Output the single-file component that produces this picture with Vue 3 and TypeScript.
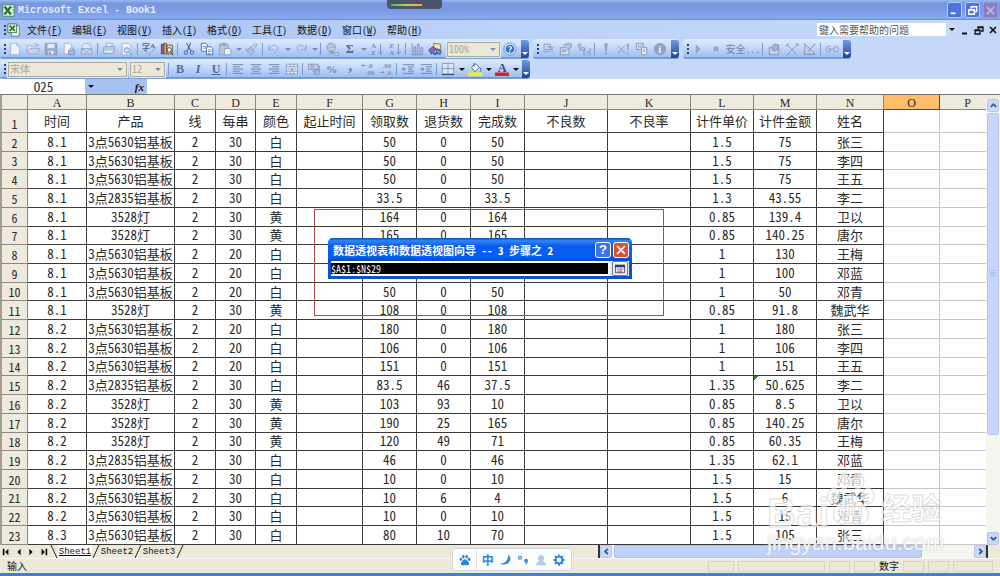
<script setup lang="ts">
import { ref } from 'vue'

type Shape = [d: string, fill: string, stroke?: string]
type Glyph = [x: number, y: number, size: number, text: string, fill?: string]
interface Icon { s?: Shape[]; t?: Glyph[] }
interface Tool { k: 'icon' | 'sep' | 'drop' | 'text'; icon?: string; label?: string; cls?: string; dark?: boolean }

const G = '#8092b5'
const L = '#dfe8f8'
const icons: Record<string, Icon> = {
  new: { s: [['M3 1.5h7l3 3v10H3z', '#eef3fc', '#a3b2ce'], ['M10 1.5v3h3', 'none', '#a3b2ce']] },
  open: { s: [['M1.5 13V4h4l1 1.5h5V8', L, '#9aabc9'], ['M1.5 13.5l3-6h11l-3 6z', '#c9d6ee', '#9aabc9'], ['M9 3c2-2 4-1 5 1m0-2v2h-2', 'none', '#9aabc9']] },
  save: { s: [['M1.5 1.5h13v13h-13z', '#98a9c9', G], ['M4 2h8v5H4z', '#e4ecfa'], ['M5 10h6v4H5z', '#dbe5f7'], ['M6 11h2v3H6z', G]] },
  perm: { s: [['M2.5 1.5h6l3 3v9h-9z', '#eef3fc', '#a3b2ce'], ['M7.5 9.5h7v5h-7z', '#a9b8d4', G], ['M9 9c0-3 4-3 4 0', 'none', G]] },
  mail: { s: [['M2.5 6c0-6 10-6 10 0v3h-10z', L, '#9aabc9'], ['M1.5 7.5h12v6h-12z', '#c7d4ed', '#8fa1c3'], ['M1.5 7.5l6 4 6-4', 'none', '#8fa1c3']] },
  print: { s: [['M5 6V1.5h7L11 6', '#f1f5fd', '#9aabc9'], ['M1.5 7l2-2h11v6l-2 2h-11z', '#b9c7e1', '#8fa1c3'], ['M3 10h9v2H3z', '#e7eefb']] },
  preview: { s: [['M2.5 1.5h7l3 3v10h-10z', '#eef3fc', '#a3b2ce'], ['M11 9.5a3 3 0 1 1-6 0 3 3 0 0 1 6 0M10 12l4 3', '#cddaf1', G]] },
  spell: { s: [['M4 10l4 5 8-9', 'none', '#7c94c0'], ['M4 11l4 4 8-8', 'none', '#a7b8d9']], t: [[0, 9, 9, '字', '#566b95'], [9, 7, 8, 'A', '#566b95']] },
  research: { s: [['M1.5 2.5h3v11h-3z', '#8a5aa8', '#4b3a7c'], ['M4.5 1.5h3v12h-3z', '#d9a53c', '#7a5b25'], ['M8 3.5h6v10H8z', '#e9e1c8', '#5a5248'], ['M13 9a2.5 2.5 0 1 1-5 0 2.5 2.5 0 0 1 5 0M12 11l3 4', '#fff', '#3c3930']] },
  cut: { s: [['M5 1l5 9M10 1L6 10', 'none', '#23467c'], ['M6.5 12a2 2 0 1 1-4 0 2 2 0 0 1 4 0M13.5 12a2 2 0 1 1-4 0 2 2 0 0 1 4 0', 'none', '#2558b8']] },
  copy: { s: [['M1.5 1.5h5l2 2v7h-7z', '#fff', '#3f64a3'], ['M7.5 5.5h5l2 2v7h-7z', '#fff', '#3f64a3'], ['M3 5h4M3 7h4M9 9h4M9 11h4M9 13h3', 'none', '#5c82c4']] },
  paste: { s: [['M1.5 2.5h10v12h-10z', '#b7c4dd', '#8fa1c3'], ['M4 1h5v3H4z', '#93a5c7'], ['M7.5 7.5h6l1 1v6h-7z', '#eff4fd', '#8fa1c3']] },
  brush: { s: [['M1 9l6-3 4 4-4 5z', '#aebedc', '#8fa1c3'], ['M6 7l6-5 2 1-5 6z', '#c7d4ed', '#8fa1c3']] },
  undo: { s: [['M2 3v6h6M3 8c2-6 11-6 9 1-1 2-2 3-4 4', 'none', '#8c9ec2']] },
  redo: { s: [['M14 3v6H8M13 8C11 2 2 2 4 9c1 2 2 3 4 4', 'none', '#8c9ec2']] },
  link: { s: [['M12 6a5 5 0 1 1-10 0 5 5 0 0 1 10 0', '#a9bad8', '#8fa1c3'], ['M3 4c3 2 5 0 7-2M4 9c2-2 5-1 7-1', 'none', '#dbe5f6'], ['M6 12h4m1 0h4v3h-4zM5 10.5h4v3H5z', '#dbe5f6', G]] },
  sum: { t: [[3, 13, 14, 'Σ', '#53688f']] },
  az: { s: [['M12 2v12M9.5 11l2.5 3 2.5-3', 'none', '#7489b0']], t: [[1, 7, 8, 'A', '#7489b0'], [1, 15, 8, 'Z', '#7489b0']] },
  za: { s: [['M12 2v12M9.5 11l2.5 3 2.5-3', 'none', '#7489b0']], t: [[1, 7, 8, 'Z', '#7489b0'], [1, 15, 8, 'A', '#7489b0']] },
  chart: { s: [['M2.5 1.5v13h12', 'none', '#8194b8'], ['M4.5 5.5h2v9h-2zM8.5 2.5h2v12h-2zM12.5 6.5h2v8h-2z', '#c2cfe8', '#8194b8']] },
  draw: { s: [['M6.5 1.5l8 1v6l-8-1z', '#f3e3a8', '#8a7336'], ['M10 8l5 2-1 4-5-1z', '#6c8fe0', '#2d4fa8'], ['M1 9l5-4 3 3-5 6z', '#8a66b8', '#4b3a7c'], ['M6 12h4v3H6z', '#3c69c8']] },
  help: { s: [['M15 8A7 7 0 1 1 1 8a7 7 0 0 1 14 0', '#d8e8fd', '#5f8fd0'], ['M13 8A5 5 0 1 1 3 8a5 5 0 0 1 10 0', '#2f6dcc']], t: [[5, 12, 11, '?', '#fff']] },
  hand: { s: [['M3.5 2.5h7v6h-7zM6.5 5.5h6v6', '#d2def3', G], ['M2 11h7l5-5', 'none', G]] },
  form: { s: [['M1.5 6.5h10v8h-10zM3 9h7M3 11h5', '#d2def3', G], ['M5 4l3-2h6v4l-4 2', '#b5c4df', G]] },
  tree: { s: [['M1.5 2.5h3v3h-3zM5.5 6.5h3v3h-3zM3 6v3h2', '#d2def3', G], ['M9 8h-1v7h1M14 8h1v7h-1', 'none', G]], t: [[10, 15, 8, '?', G]] },
  bang: { s: [['M6.5 2h3l-1 8h-1zM7 12h2v2H7z', '#91a3c4', '#91a3c4']] },
  xbang: { s: [['M1 4l8 9M9 4l-8 9', 'none', G], ['M11 2h3l-1 8h-1zM11 12h2v2h-2z', '#91a3c4']] },
  sheets: { s: [['M1.5 1.5h8v7h-8z', L, G], ['M3 3l5 4M8 3L3 7', 'none', G], ['M7.5 6.5h6v8h-6zM9 9h3M9 11h3', '#eef3fc', G]] },
  info: { s: [['M15 8A7 7 0 1 1 1 8a7 7 0 0 1 14 0', '#8fa2c5']], t: [[6, 12, 12, 'i', '#eef3fc']] },
  play: { s: [['M6 3.500l4 4.500-4 4.500z', '#9fb1d2', '#8296bb']] },
  rec: { s: [['M11 8a3 3 0 1 1-6 0 3 3 0 0 1 6 0', '#95a8ca', '#a6b7d5']] },
  vb: { s: [['M2.5 6.5h11v8h-11z', '#c2cfe8', G], ['M5 6l4-4 5 2-2 5-5 1z', '#a2b3d2', G]] },
  tools: { s: [['M2 3l11 11M14 3L3 14M1 5l4-4M12 2h3v3', 'none', G], ['M2 14h3', 'none', G]] },
  design: { s: [['M2 2v12h12z', '#c2cfe8', G], ['M6 11l8-9', 'none', '#7286ad'], ['M1 14h13', 'none', G]] },
  loop: { s: [['M6 5c-5-2-7 6-2 6 4 0 5-6 9-6 4 1 3 7-1 6-3 0-3-3-1-4M4 9c-1-2 3-3 3 0', 'none', G]] },
  left: { s: [['M2 3h12M2 5.5h8M2 8h12M2 10.5h8M2 13h12', 'none', '#6a7fa8']] },
  center: { s: [['M2 3h12M4 5.5h8M2 8h12M4 10.5h8M2 13h12', 'none', '#6a7fa8']] },
  right: { s: [['M2 3h12M6 5.5h8M2 8h12M6 10.5h8M2 13h12', 'none', '#6a7fa8']] },
  merge: { s: [['M1.5 2.5h13v11h-13zM1.5 5.5h13M1.5 10.5h13M6 2.5v3M10 2.5v3M6 10.5v3M10 10.5v3M3 8h3M10 8h3', '#eef3fc', '#8397bc']], t: [[6, 10, 7, 'a', G]] },
  money: { s: [['M1.5 2.5h11v6h-11z', '#c2cfe8', G], ['M8 5.5a2 1.5 0 1 1-4 0 2 1.5 0 0 1 4 0M6 11h7M7 13h6M14 4v6', 'none', G], ['M9 9h5v5H9z', '#a9bad8', G]] },
  pct: { t: [[1, 13, 13, '%', '#6f84ab']] },
  comma: { t: [[6, 10, 18, ',', '#6f84ab']] },
  decinc: { s: [['M1 4h5M1 4l2-2M1 4l2 2', 'none', G]], t: [[7, 7, 8, '.0', G], [5, 15, 8, '.00', G]] },
  decdec: { s: [['M1 12h5M6 12l-2-2M6 12l-2 2', 'none', G]], t: [[4, 7, 8, '.00', G], [8, 15, 8, '.0', G]] },
  outdent: { s: [['M2 3h13M8 5.5h7M8 8h5M8 10.5h7M2 13h13M1 8h5M4 6L1.5 8 4 10', 'none', '#6a7fa8']] },
  indent: { s: [['M2 3h13M8 5.5h7M8 8h5M8 10.5h7M2 13h13M1 8h5M3 6l2.5 2L3 10', 'none', '#6a7fa8']] },
  border: { s: [['M1.5 1.5h13v12h-13zM8 1.5v12M1.5 7.5h13', '#dde8fb', '#7f90b3'], ['M1 14.5h14', 'none', '#1f3563']] },
  fill: { s: [['M4 6l5-4 4 4-5 5z', '#f4f8ff', '#4f6591'], ['M7 5V1M13 6c2 1 2 3 1 5', 'none', '#2c5cb4'], ['M0 12h16v4H0z', '#f4ee22']] },
  color: { s: [['M0 12h16v4H0z', '#d81f2a']], t: [[3, 11, 14, 'A', '#2d4a88']] },
}

const i = (icon: string, label: string): Tool => ({ k: 'icon', icon, label })
const t = (label: string, cls: string): Tool => ({ k: 'text', label, cls })
const sep: Tool = { k: 'sep' }
const drop = (dark = false): Tool => ({ k: 'drop', dark })

const standard: Tool[] = [
  i('new', '新建'), i('open', '打开'), i('save', '保存'), i('perm', '权限'), i('mail', '邮件'), sep,
  i('print', '打印'), i('preview', '预览'), sep, i('spell', '拼写'), i('research', '信息检索'), sep,
  i('cut', '剪切'), i('copy', '复制'), i('paste', '粘贴'), drop(), i('brush', '格式刷'), sep,
  i('undo', '撤消'), drop(), i('redo', '恢复'), drop(), sep, i('link', '超链接'), i('sum', '求和'), drop(),
  i('az', '升序'), i('za', '降序'), sep, i('chart', '图表'), i('draw', '绘图'),
]
const pivotTools: Tool[] = [
  i('hand', '编辑查询'), i('form', '区域属性'), i('tree', '参数'), sep,
  i('bang', '刷新'), i('xbang', '取消刷新'), i('sheets', '全部刷新'), i('info', '刷新状态'),
]
const vbTools: Tool[] = [
  i('play', '运行宏'), i('rec', '录制宏'), t('安全...', 'safe'), sep,
  i('vb', 'Visual Basic'), i('tools', '控件'), i('design', '设计'), sep, i('loop', '脚本'),
]
const formatting: Tool[] = [
  sep, t('B', 'bold'), t('I', 'italic'), t('U', 'under'), sep,
  i('left', '左对齐'), i('center', '居中'), i('right', '右对齐'), i('merge', '合并'), sep,
  i('money', '货币'), i('pct', '百分比'), i('comma', '千位分隔'), i('decinc', '增加小数'), i('decdec', '减少小数'), sep,
  i('outdent', '减少缩进'), i('indent', '增加缩进'), sep,
  i('border', '边框'), drop(true), i('fill', '填充颜色'), drop(true), i('color', '字体颜色'), drop(true),
]

const menus = [
  ['文件', 'F'], ['编辑', 'E'], ['视图', 'V'], ['插入', 'I'], ['格式', 'O'],
  ['工具', 'T'], ['数据', 'D'], ['窗口', 'W'], ['帮助', 'H'],
]

const letters = 'ABCDEFGHIJKLMNOP'.split('')
const P = '3点5630铝基板'
const Q = '3点2835铝基板'
const D = '3528灯'
const rows: string[][] = [
  ['时间', '产品', '线', '每串', '颜色', '起止时间', '领取数', '退货数', '完成数', '不良数', '不良率', '计件单价', '计件金额', '姓名'],
  ...([
    ['8.1', P, '30', '白', '50', '0', '50', '1.5', '75', '张三'],
    ['8.1', P, '30', '白', '50', '0', '50', '1.5', '75', '李四'],
    ['8.1', P, '30', '白', '50', '0', '50', '1.5', '75', '王五'],
    ['8.1', Q, '30', '白', '33.5', '0', '33.5', '1.3', '43.55', '李二'],
    ['8.1', D, '30', '黄', '164', '0', '164', '0.85', '139.4', '卫以'],
    ['8.1', D, '30', '黄', '165', '0', '165', '0.85', '140.25', '唐尔'],
    ['8.1', P, '20', '白', '130', '0', '130', '1', '130', '王梅'],
    ['8.1', P, '20', '白', '100', '0', '100', '1', '100', '邓蓝'],
    ['8.1', P, '20', '白', '50', '0', '50', '1', '50', '邓青'],
    ['8.1', D, '30', '黄', '108', '0', '108', '0.85', '91.8', '魏武华'],
    ['8.2', P, '20', '白', '180', '0', '180', '1', '180', '张三'],
    ['8.2', P, '20', '白', '106', '0', '106', '1', '106', '李四'],
    ['8.2', P, '20', '白', '151', '0', '151', '1', '151', '王五'],
    ['8.2', Q, '30', '白', '83.5', '46', '37.5', '1.35', '50.625', '李二'],
    ['8.2', D, '30', '黄', '103', '93', '10', '0.85', '8.5', '卫以'],
    ['8.2', D, '30', '黄', '190', '25', '165', '0.85', '140.25', '唐尔'],
    ['8.2', D, '30', '黄', '120', '49', '71', '0.85', '60.35', '王梅'],
    ['8.2', Q, '30', '白', '46', '0', '46', '1.35', '62.1', '邓蓝'],
    ['8.2', P, '30', '白', '10', '0', '10', '1.5', '15', '邓青'],
    ['8.2', P, '30', '白', '10', '6', '4', '1.5', '6', '魏武华'],
    ['8.2', P, '30', '白', '10', '0', '10', '1.5', '15', '邓青'],
    ['8.3', P, '30', '白', '80', '10', '70', '1.5', '105', '张三'],
  ].map(r => [r[0], r[1], '2', r[2], r[3], '', r[4], r[5], r[6], '', '', r[7], r[8], r[9]])),
]

const bars = [
  { name: '常用', tools: standard, zoom: true },
  { name: '外部数据', tools: pivotTools, zoom: false },
  { name: 'Visual Basic', tools: vbTools, zoom: false },
]
const range = ref('$A$1:$N$29')
const cellName = ref('O25')
const question = ref('')
</script>

<template>
  <div class="app">
    <header class="title">
      <svg class="logo" viewBox="0 0 16 16"><path d="M1 1h14v14H1z" fill="#f2f8ee" stroke="#2d7a35" /><path d="M3 3l8 10M11 3L3 13" stroke="#237a2c" stroke-width="3" /><path d="M12 4h3M12 7h3M12 10h3" stroke="#6aa86c" /></svg>
      <h1>Microsoft Excel - Book1</h1>
      <div class="winbtns">
        <button aria-label="最小化"><svg viewBox="0 0 14 14"><path d="M3 10h5" stroke="#fff" stroke-width="2" /></svg></button>
        <button aria-label="还原"><svg viewBox="0 0 14 14"><path d="M5.5 5V3h6v5h-2M3 6h6v5H3zM3 6.5h6" stroke="#fff" fill="none" stroke-width="1.500" /></svg></button>
        <button aria-label="关闭" class="off"><svg viewBox="0 0 14 14"><path d="M3 3l8 8M11 3l-8 8" stroke="#b9b3dd" stroke-width="2" /></svg></button>
      </div>
    </header>

    <nav class="menu">
      <i class="grip"></i>
      <svg class="doc" viewBox="0 0 16 16"><path d="M5 3h9v12H5z" fill="#f5f8ff" stroke="#5470ae" /><path d="M1 1h10v10H1z" fill="#e6f3df" stroke="#2f7c38" /><path d="M3 3l6 6M9 3L3 9" stroke="#237a2c" stroke-width="2" /></svg>
      <button v-for="m in menus" :key="m[1]" class="mitem">{{ m[0] }}(<u>{{ m[1] }}</u>)</button>
      <div class="ask">
        <input v-model="question" aria-label="帮助问题" placeholder="键入需要帮助的问题">
        <button aria-label="展开"><i class="tri"></i></button>
      </div>
      <div class="docbtns">
        <button aria-label="最小化文档"><svg viewBox="0 0 10 10"><path d="M2 8.5h5" stroke="#111" stroke-width="2" /></svg></button>
        <button aria-label="还原文档"><svg viewBox="0 0 10 10"><path d="M4 4V2h5v4H7M1 5h5v4H1zM1 5.5h5M4 2.5h5" stroke="#111" fill="none" stroke-width="1.300" /></svg></button>
        <button aria-label="关闭文档"><svg viewBox="0 0 10 10"><path d="M2 2l6 6M8 2L2 8" stroke="#111" stroke-width="1.600" /></svg></button>
      </div>
    </nav>

    <div class="dock">
      <div v-for="b in bars" :key="b.name" class="bar" role="toolbar" :aria-label="b.name">
        <i class="grip"></i>
        <template v-for="(x, n) in b.tools" :key="n">
          <i v-if="x.k === 'sep'" class="sep"></i>
          <button v-else-if="x.k === 'drop'" class="drop" aria-label="更多"><i class="tri" :class="{ pale: !x.dark }"></i></button>
          <button v-else-if="x.k === 'text'" class="tool" :class="x.cls">{{ x.label }}</button>
          <button v-else class="tool" :aria-label="x.label">
            <svg viewBox="0 0 16 16">
              <path v-for="(s, q) in icons[x.icon!].s" :key="q" :d="s[0]" :fill="s[1]" :stroke="s[2] || 'none'" />
              <text v-for="(g, q) in icons[x.icon!].t" :key="'t' + q" :x="g[0]" :y="g[1]" :font-size="g[2]" :fill="g[4]">{{ g[3] }}</text>
            </svg>
          </button>
        </template>
        <template v-if="b.zoom">
          <span class="combo zoom"><select aria-label="显示比例"><option>100%</option></select><i class="tri pale"></i></span>
          <button class="tool" aria-label="帮助">
            <svg viewBox="0 0 16 16">
              <path v-for="(s, q) in icons.help.s" :key="q" :d="s[0]" :fill="s[1]" :stroke="s[2] || 'none'" />
              <text v-for="(g, q) in icons.help.t" :key="q" :x="g[0]" :y="g[1]" :font-size="g[2]" :fill="g[4]">{{ g[3] }}</text>
            </svg>
          </button>
        </template>
        <button class="cap" aria-label="工具栏选项"><i class="tri"></i></button>
      </div>
    </div>

    <div class="dock">
      <div class="bar" role="toolbar" aria-label="格式">
        <i class="grip"></i>
        <span class="combo font"><select aria-label="字体"><option>宋体</option></select><i class="tri pale"></i></span>
        <span class="combo size"><select aria-label="字号"><option>12</option></select><i class="tri pale"></i></span>
        <template v-for="(x, n) in formatting" :key="n">
          <i v-if="x.k === 'sep'" class="sep"></i>
          <button v-else-if="x.k === 'drop'" class="drop" aria-label="更多"><i class="tri" :class="{ pale: !x.dark }"></i></button>
          <button v-else-if="x.k === 'text'" class="tool" :class="x.cls">{{ x.label }}</button>
          <button v-else class="tool" :aria-label="x.label">
            <svg viewBox="0 0 16 16">
              <path v-for="(s, q) in icons[x.icon!].s" :key="q" :d="s[0]" :fill="s[1]" :stroke="s[2] || 'none'" />
              <text v-for="(g, q) in icons[x.icon!].t" :key="'t' + q" :x="g[0]" :y="g[1]" :font-size="g[2]" :fill="g[4]">{{ g[3] }}</text>
            </svg>
          </button>
        </template>
        <button class="cap" aria-label="工具栏选项"><i class="tri"></i></button>
      </div>
    </div>

    <div class="formula">
      <input v-model="cellName" class="name" aria-label="名称框">
      <div class="fx"><button aria-label="名称列表"><i class="tri"></i></button><button class="fn">fx</button></div>
      <input class="entry" aria-label="编辑栏">
    </div>

    <main class="sheet">
      <div class="view">
        <table>
          <colgroup><col class="w26"><col v-for="l in letters" :key="l" :class="'c' + l"></colgroup>
          <thead>
            <tr><th></th><th v-for="l in letters" :key="l" :class="{ on: l === 'O', last: l === 'P' }">{{ l }}</th></tr>
          </thead>
          <tbody>
            <tr v-for="(r, n) in rows" :key="n">
              <th>{{ n + 1 }}</th>
              <td v-for="(c, m) in r" :key="m" :class="{ flag: n === 14 && m === 12 }">{{ c }}</td>
              <td class="blank"></td><td class="blank"></td>
            </tr>
          </tbody>
        </table>
        <div class="mark"></div>
      </div>
      <div class="vscroll">
        <button aria-label="向上"><svg viewBox="0 0 10 10"><path d="M2 6.5L5 3.5l3 3" /></svg></button>
        <div class="vthumb"><i></i></div>
        <div class="vrest"></div>
        <button aria-label="向下"><svg viewBox="0 0 10 10"><path d="M2 3.5l3 3 3-3" /></svg></button>
      </div>
    </main>

    <div class="tabs">
      <div class="nav">
        <button aria-label="第一张"><svg viewBox="0 0 10 10"><path d="M1 1h2v8H1zM8 1v8L4 5z" /></svg></button>
        <button aria-label="上一张"><svg viewBox="0 0 10 10"><path d="M7 1v8L3 5z" /></svg></button>
        <button aria-label="下一张"><svg viewBox="0 0 10 10"><path d="M3 1v8l4-4z" /></svg></button>
        <button aria-label="最后一张"><svg viewBox="0 0 10 10"><path d="M2 1v8l4-4zM7 1h2v8H7z" /></svg></button>
      </div>
      <svg class="slash" viewBox="0 0 8 13"><path d="M1 0l6 13" /></svg>
      <template v-for="n in 3" :key="n">
        <button class="tab" :class="{ cur: n === 1 }">Sheet{{ n }}</button>
        <svg class="slash" viewBox="0 0 8 13"><path d="M7 0L1 13" /></svg>
      </template>
      <div class="hscroll">
        <button aria-label="向左"><svg viewBox="0 0 10 10"><path d="M6.5 2L3.5 5l3 3" /></svg></button>
        <div class="hthumb"></div>
        <div class="hrest"></div>
        <button aria-label="向右"><svg viewBox="0 0 10 10"><path d="M3.5 2l3 3-3 3" /></svg></button>
      </div>
      <div class="corner"></div>
    </div>

    <footer class="status">
      <span>输入</span>
      <div class="panes"><i class="p26"></i><i class="p87"></i><i class="p20"></i><i class="p20"></i><b>数字</b><i class="p20"></i><i class="p20"></i><i class="p40"></i></div>
    </footer>
    <div class="task"></div>

    <div class="pill"><i></i></div>

    <section class="dialog" role="dialog" aria-label="数据透视表和数据透视图向导">
      <div class="dtitle">
        <h2>数据透视表和数据透视图向导 -- 3 步骤之 2</h2>
        <button class="q">?</button>
        <button class="x" aria-label="关闭"><svg viewBox="0 0 14 14"><path d="M2.5 2.5l9 9M11.5 2.5l-9 9" stroke="#fff" stroke-width="2" /></svg></button>
      </div>
      <div class="dbody">
        <div class="field"><input v-model="range" aria-label="选定区域"></div>
        <button class="pick" aria-label="展开对话框"><svg viewBox="0 0 14 12"><path d="M1.5 1.5h11v9h-11z" fill="#fff" stroke="#2b3a70" /><path d="M1 1h12v3H1z" fill="#2b3a70" /><path d="M3 6h8M3 8.5h3" stroke="#555c80" /><path d="M8 6v4M6 8l2 2.5L10 8" stroke="#d0202c" fill="none" /></svg></button>
      </div>
    </section>

    <div class="water">
      <div class="brand">
        <span>Bai</span>
        <span class="paw">
          <svg viewBox="0 0 48 58"><ellipse cx="7" cy="25" rx="6" ry="8" /><ellipse cx="17" cy="10" rx="6" ry="8" /><ellipse cx="31" cy="10" rx="6" ry="8" /><ellipse cx="41" cy="25" rx="6" ry="8" /><path d="M24 23c-6 0-8 7-14 12-6 6-4 18 5 18 4 0 6-1 9-1s5 1 9 1c9 0 11-12 5-18-6-5-8-12-14-12z" /></svg>
          <em>du</em>
        </span>
        <span class="cn">经验</span>
      </div>
      <div class="url">jingyan.baidu.com</div>
    </div>

    <div class="ime">
      <button aria-label="输入法"><svg viewBox="0 0 16 16"><path d="M8 7c-2 0-3 2-4 3-3 3-1 5 1 5 1 0 2-.5 3-.5s2 .5 3 .5c2 0 4-2 1-5-1-1-2-3-4-3z" fill="#2f86d8" /><g fill="#2f86d8"><ellipse cx="2.500" cy="7" rx="1.700" ry="2.200" /><ellipse cx="5.800" cy="3.500" rx="1.700" ry="2.400" /><ellipse cx="10.200" cy="3.500" rx="1.700" ry="2.400" /><ellipse cx="13.500" cy="7" rx="1.700" ry="2.200" /></g></svg></button>
      <i></i>
      <button class="zh">中</button>
      <button aria-label="半角"><svg viewBox="0 0 16 16"><path d="M11 1c7 6 0 16-11 12 7 0 11-5 11-12z" fill="#2f86d8" /></svg></button>
      <button aria-label="标点"><svg viewBox="0 0 16 16"><circle cx="4" cy="5" r="2" fill="none" stroke="#2f86d8" stroke-width="1.500" /><path d="M9.500 8.500a2.500 2.500 0 0 1 5 .5c0 3-2 5-4 6 1-2 1.500-2.500 1.500-3.500-1.500 0-2.500-1.500-2.500-3z" fill="#2f86d8" /></svg></button>
      <button aria-label="用户"><svg viewBox="0 0 16 16"><circle cx="8" cy="5.500" r="4" fill="#b4cbe2" /><path d="M1 15c0-4 4-4 4-6h6c0 2 4 2 4 6z" fill="#b4cbe2" /></svg></button>
      <button aria-label="设置"><svg viewBox="0 0 16 16"><circle cx="8" cy="8" r="4.500" fill="none" stroke="#2f86d8" stroke-width="2.500" /><path d="M8 .5v3M8 12.500v3M.5 8h3M12.500 8h3M2.700 2.700l2 2M11.300 11.300l2 2M13.300 2.700l-2 2M4.700 11.300l-2 2" stroke="#2f86d8" stroke-width="2.500" /></svg></button>
    </div>
  </div>
</template>

<style>
html, body { margin: 0; background: #ece9d8; }
</style>

<style scoped>
.app {
  --song: "Noto Sans Mono CJK SC", "Liberation Serif", "Noto Sans CJK SC", serif;
  position: relative;
  height: 100vh;
  display: flex;
  flex-direction: column;
  overflow: hidden;
  font: 10px/14px var(--song);
  color: #111;
}
* { box-sizing: border-box; }
button, input, select { border: 0; padding: 0; margin: 0; background: none; font: inherit; color: inherit; outline: 0; border-radius: 0; }
button { display: flex; align-items: center; justify-content: center; white-space: nowrap; }
svg { display: block; }
.tri { display: block; border: 3px solid transparent; border-top-color: #111; border-bottom: 0; }
.tri.pale { border-top-color: #7c8cab; }

.title { height: 20px; flex: none; display: flex; align-items: center; padding: 0 2px; background: linear-gradient(#96bdf3, #7c96e0 15%, #7c98e3 50%, #84abf0 90%, #6e8bd8); }
.logo { width: 13px; height: 13px; }
h1 { flex: 1; margin: 0 0 0 3px; font: bold 10px/19px "Liberation Mono", monospace; color: #e4ecfd; }
.winbtns { display: flex; gap: 3px; }
.winbtns button { width: 15px; height: 16px; border: 1px solid #b6c8f4; border-radius: 2px; background: #4f74dc; }
.winbtns .off { background: #8b7cc0; border-color: #9f93cf; }
.winbtns svg { width: 13px; height: 13px; }

.menu { height: 19px; flex: none; display: flex; align-items: center; padding: 0 2px; background: linear-gradient(90deg, #a6c0f4, #bdd2f8 50%, #c4d8f8); }
.grip { width: 4px; height: 12px; flex: none; background: radial-gradient(circle at 3px 2px, #24406f 1px, transparent 1px) 0 0 / 7px 4px; }
.menu .grip { width: 5px; }
.doc { width: 14px; height: 14px; margin-right: 1px; }
.mitem { width: 45px; font-size: 10px; height: 17px; }
.ask { margin-left: auto; display: flex; width: 140px; height: 13px; background: #fff; }
.ask input { flex: 1; min-width: 0; padding-left: 2px; line-height: 13px; }
.ask input::placeholder { color: #555; opacity: 1; }
.ask button { width: 11px; background: #c8daf9; }
.docbtns { display: flex; gap: 4px; padding-left: 3px; }
.docbtns button, .docbtns svg { width: 10px; height: 10px; }

.dock { height: 20px; flex: none; display: flex; gap: 4px; background: #c4d8f8; }
.bar { display: flex; align-items: center; height: 20px; padding-left: 2px; border-radius: 3px; background: linear-gradient(#dfebfe, #c5dafa 40%, #a0c0f0 88%, #7095d2 92%, #7fa3da); }
.tool { width: 18px; height: 18px; flex: none; }
.tool svg { width: 14px; height: 14px; overflow: visible; font-family: "Liberation Serif", "Noto Sans CJK SC", serif; font-weight: bold; }
.drop { width: 9px; height: 18px; }
.sep { width: 1px; height: 12px; margin: 0 2px 0 1px; background: #7d9bcf; }
.cap { align-self: stretch; width: 8px; margin: 1px 0 1px 2px; align-items: flex-end; padding-bottom: 3px; border-radius: 0 3px 3px 0; background: linear-gradient(#6f9be4, #1c4796); }
.cap .tri { border-top-color: #fff; }
.safe { width: 36px; color: #70819f; font-size: 10px; }
.bold, .italic, .under { font: bold 12px/18px "Liberation Serif", serif; color: #4f6898; }
.italic { font-style: italic; }
.under { text-decoration: underline; }
.combo { display: flex; align-items: center; height: 15px; border: 1px solid #a9ab9f; outline: 1px solid #dfe8f3; background: #ebe8d8; padding-right: 3px; margin-right: 3px; }
.combo select { flex: 1; min-width: 0; appearance: none; color: #a8a795; padding-left: 1px; height: 13px; font-size: 10px; line-height: 12px; }
.zoom { width: 53px; margin: 0 1px 0 3px; }
.font { width: 119px; margin-left: 2px; }
.size { width: 35px; margin-right: 2px; }

.formula { height: 15px; flex: none; display: flex; background: #fff; padding-left: 2px; }
.name { width: 83px; text-align: center; font-size: 13px; color: #333; }
.fx { width: 62px; display: flex; justify-content: space-between; padding: 0 3px; background: #a6c2f3; }
.fn { font: italic bold 11px/14px "Liberation Serif", serif; }
.entry { flex: 1; }

.sheet { flex: 1; min-height: 0; display: flex; background: #fff; border-top: 1px solid #77756a; border-left: 2px solid #a19e90; }
.view { flex: 1; min-width: 0; position: relative; }
table { width: 100%; height: 100%; table-layout: fixed; border-collapse: separate; border-spacing: 0; font-size: 13px; line-height: 14px; color: #2a2a2a; }
th, td { padding: 0; text-align: center; white-space: nowrap; overflow: hidden; font-weight: normal; border: solid #3a3a3a; border-width: 0 1px 1px 0; }
thead th { height: 15px; padding-top: 2px; font: 12px/12px "Liberation Serif", serif; background: #eeeadd; border-color: #8c897c; }
thead .on { background: #fcbd6c; border-color: #5c4a30; }
thead .last { padding-left: 9px; border-right: 0; }
tbody th { vertical-align: bottom; background: #eeeadd; border-color: #8c897c; font-size: 12px; line-height: 16px; }
tbody tr:first-child { height: 23px; }
.blank { border-color: #c6c6c6; }
.blank:last-child { border-right: 0; }
.flag { background: linear-gradient(135deg, #1c8a32 3px, transparent 3px); }
.w26 { width: 26px; }
.cA { width: 59px; } .cB { width: 88px; } .cC { width: 41px; } .cD { width: 40px; } .cE { width: 41px; }
.cF { width: 66px; } .cG, .cH, .cI { width: 54px; } .cJ, .cK { width: 83px; } .cL, .cM { width: 63px; }
.cN { width: 67px; } .cO { width: 56px; }
.mark { position: absolute; left: 312px; top: 114px; width: 350px; height: 107px; border: 1px solid #b04a50; }

.vscroll { width: 14px; flex: none; display: flex; flex-direction: column; padding: 0 1px; background: #f6f6f1; border-top: 4px solid #eeeadd; }
.vscroll button, .hscroll button { width: 12px; height: 13px; flex: none; border: 1px solid #b3c6ef; border-radius: 2px; background: #c9d8fb; }
.vscroll button svg, .hscroll button svg { width: 9px; height: 9px; fill: none; stroke: #3d5480; stroke-width: 2; }
.vthumb { flex: 77; display: flex; align-items: center; justify-content: center; margin: 1px 0; border: 1px solid #b5c8f2; border-radius: 2px; background: #c6d5fc; }
.vthumb i { width: 6px; height: 8px; background: repeating-linear-gradient(#a9bfea 0 1px, transparent 1px 2px); }
.vrest { flex: 23; }

.tabs { height: 13px; flex: none; display: flex; background: #ece9d8; }
.nav { display: flex; width: 50px; padding-left: 0; }
.nav button { width: 13px; }
.nav svg { width: 8px; height: 8px; }
.slash { width: 8px; height: 13px; stroke: #222; fill: none; }
.tab { width: 34px; padding-top: 2px; font: 9px/11px "Liberation Mono", monospace; }
.cur { background: #fff; text-decoration: underline; }
.hscroll { margin-left: auto; width: 39%; display: flex; border: solid #333; border-width: 0 2px; background: #f6f6f1; }
.hthumb { flex: 85; margin: 0 2px; border: 1px solid #a9bff0; border-radius: 2px; background: #c0d1fb; }
.hrest { flex: 14; }
.corner { width: 12px; flex: none; }

.status { height: 15px; flex: none; display: flex; align-items: center; justify-content: space-between; padding: 0 7px; background: #ece9d8; border-top: 1px solid #f8f7ef; }
.panes { display: flex; align-items: center; gap: 4px; }
.panes i { height: 11px; border: 1px solid #d8d4c2; }
.panes b { font-weight: normal; }
.p26 { width: 26px; } .p87 { width: 87px; } .p20 { width: 21px; } .p40 { width: 40px; }
.task { height: 3px; flex: none; background: #3f7fdc; }

.pill { position: absolute; left: 387px; top: 0; width: 55px; height: 9px; padding: 4px 0 0 4px; border-radius: 0 0 4px 4px; background: #4b5468; }
.pill i { display: block; width: 31px; height: 2px; background: linear-gradient(90deg, #2fc26b, #c7d046, #f0a83a); }

.dialog { position: absolute; left: 328px; top: 238px; width: 304px; height: 41px; border-radius: 5px 5px 0 0; background: #0a50d8; padding: 0 3px 3px; }
.dtitle { display: flex; align-items: center; height: 23px; margin: 0 -3px; padding: 0 3px 0 5px; gap: 2px; border-radius: 5px 5px 0 0; background: linear-gradient(#1348b8, #2f86fb 12%, #0a5be8 35%, #0660f4 80%, #0948c4); }
h2 { flex: 1; margin: 0; color: #fff; font: bold 11px/20px var(--song); white-space: nowrap; }
.q, .x { width: 16px; height: 16px; border: 1px solid #fff; border-radius: 3px; background: #3c74ec; color: #fff; font: bold 13px/14px "Liberation Sans", sans-serif; }
.x { background: #dc5031; }
.x svg { width: 12px; height: 12px; }
.dbody { display: flex; align-items: center; height: 15px; background: #ece9d8; }
.field { flex: 1; height: 15px; padding: 2px 2px 2px 0; background: #fff; display: flex; }
.field input { width: 100%; height: 11px; background: #000; color: #fff; font: 10px/11px var(--song); }
.pick { width: 16px; height: 15px; margin: 0 1px 0 2px; border: 1px solid #6d7ca6; border-radius: 2px; background: #f4f2e8; }
.pick svg { width: 12px; height: 10px; }

.water { position: absolute; right: 53px; bottom: 23px; width: 180px; color: rgba(255, 255, 255, 0.7); -webkit-text-stroke: 1px rgba(190, 190, 190, 0.5); font-family: "Liberation Sans", "Noto Sans CJK SC", sans-serif; }
.brand { display: flex; align-items: flex-end; font-weight: bold; font-size: 40px; line-height: 40px; }
.paw { position: relative; width: 48px; height: 58px; margin: 0 0 4px -2px; }
.paw svg { width: 48px; height: 58px; fill: rgba(255, 255, 255, 0.7); stroke: rgba(190, 190, 190, 0.6); }
.paw em { position: absolute; left: 11px; top: 28px; font-style: normal; font-size: 20px; line-height: 22px; }
.cn { font-size: 30px; line-height: 38px; margin: 0 0 5px 6px; }
.url { font-size: 22px; line-height: 20px; -webkit-text-stroke-width: 0; color: rgba(255, 255, 255, 0.85); text-shadow: 0 0 2px #bbb; }

.ime { position: absolute; left: 452px; bottom: 5px; width: 120px; height: 23px; display: flex; align-items: center; padding: 0 3px; border: 1px solid #cfd6dd; border-radius: 3px; background: #fcfdfe; }
.ime button { flex: 1; height: 20px; }
.ime svg { width: 12px; height: 12px; }
.ime i { width: 1px; height: 20px; margin: 0 2px; background: #e0e5ea; }
.zh { color: #2f86d8; font: bold 12px/20px "Noto Sans CJK SC", sans-serif; }
</style>
